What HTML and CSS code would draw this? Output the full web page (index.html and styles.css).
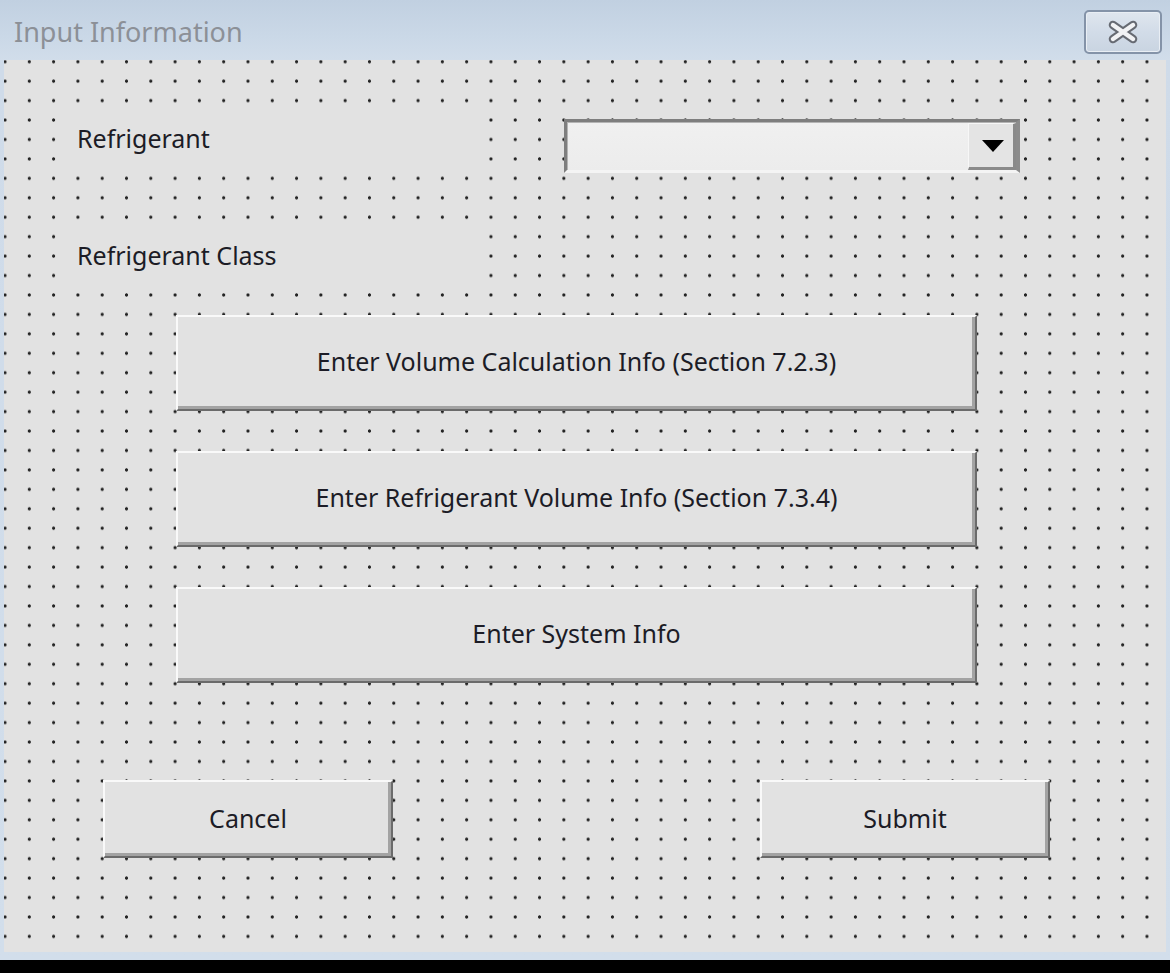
FILE: index.html
```
<!DOCTYPE html>
<html lang="en">
<head>
<meta charset="utf-8">
<title>Input Information</title>
<link rel="stylesheet" href="styles.css">
</head>
<body>
<div class="window">
  <div class="titlebar">
    <span class="title">Input Information</span>
    <div class="close">
      <svg width="32" height="24" viewBox="0 0 32 24">
        <path d="M6 5 L26 19 M26 5 L6 19" stroke="#666a72" stroke-width="8.5" stroke-linecap="round"/>
        <path d="M6 5 L26 19 M26 5 L6 19" stroke="#f1f2f4" stroke-width="4.5" stroke-linecap="round"/>
      </svg>
    </div>
  </div>
  <div class="client">
    <div class="row1">
      <div class="label">Refrigerant</div>
      <div class="combo">
        <div class="combo-field"></div>
        <div class="combo-btn">
          <svg width="22" height="12" viewBox="0 0 22 12"><path d="M0 0 H22 L11 12 Z" fill="#000"/></svg>
        </div>
      </div>
    </div>
    <div class="label label2">Refrigerant Class</div>
    <div class="actions">
      <div class="btn btn-wide">Enter Volume Calculation Info (Section 7.2.3)</div>
      <div class="btn btn-wide">Enter Refrigerant Volume Info (Section 7.3.4)</div>
      <div class="btn btn-wide">Enter System Info</div>
    </div>
    <div class="footer">
      <div class="btn btn-small">Cancel</div>
      <div class="btn btn-small">Submit</div>
    </div>
  </div>
</div>
</body>
</html>
```
FILE: styles.css
```
html, body {
  margin: 0;
  padding: 0;
  background: #000;
}
body {
  font-family: "Noto Sans", "Open Sans", sans-serif;
}
.window {
  width: 1170px;
  height: 960px;
  background: linear-gradient(180deg, #c0cfe0 0%, #cfdbe9 6%, #d2deeb 100%);
  display: flex;
  flex-direction: column;
}
.titlebar {
  height: 60px;
  flex: none;
  display: flex;
  align-items: flex-start;
  justify-content: space-between;
  background: linear-gradient(180deg, #c1d0e1 0%, #cad8e7 60%, #d1ddea 100%);
}
.title {
  margin: 14px 0 0 14px;
  font-size: 27px;
  line-height: 36px;
  color: #8c9097;
}
.close {
  margin: 10px 8px 0 0;
  width: 74px;
  height: 40px;
  border: 2px solid #8493a8;
  border-radius: 5px;
  background: linear-gradient(180deg, #dfe6ee 0%, #d2dce8 50%, #c9d4e1 100%);
  box-shadow: inset 0 0 0 1px #e9eef4;
  display: flex;
  align-items: center;
  justify-content: center;
}
.client {
  flex: 1;
  margin: 0 4px 8px 4px;
  background-color: #e2e2e2;
  background-image: radial-gradient(circle at center, #222 0, #222 1.3px, rgba(34,34,34,0) 1.9px);
  background-size: 24.3px 19.45px;
  background-position: -11.15px -8px;
  display: flex;
  flex-direction: column;
}
.row1 {
  margin-top: 50px;
  height: 63px;
  display: flex;
  align-items: flex-start;
}
.label {
  margin-left: 62px;
  width: 414px;
  height: 58px;
  box-sizing: border-box;
  padding-left: 11px;
  padding-bottom: 3px;
  background: #e2e2e2;
  display: flex;
  align-items: center;
  font-size: 25px;
  color: #1c1c26;
}
.label2 {
  margin-top: 54px;
}
.combo {
  margin-left: 84px;
  margin-top: 9px;
  width: 456px;
  height: 54px;
  box-sizing: border-box;
  border-top: 3px solid #7e7e7e;
  border-left: 3px solid #7e7e7e;
  border-right: 4px solid #8c8c8c;
  border-bottom: 3px solid #f4f4f4;
  box-shadow: inset 1px 1px 0 #b4b4b4;
  background: linear-gradient(180deg, #f0f0f0 0%, #ececec 100%);
  display: flex;
  justify-content: flex-end;
  align-items: stretch;
}
.combo-field {
  flex: 1;
}
.combo-btn {
  width: 48px;
  box-sizing: border-box;
  margin-top: 1px;
  border-top: 1px solid #f7f7f7;
  border-left: 1px solid #f7f7f7;
  border-right: 3px solid #8a8a8a;
  border-bottom: 3px solid #8a8a8a;
  background: #e4e4e4;
  display: flex;
  align-items: center;
  justify-content: center;
  padding-left: 4px;
}
.actions {
  margin-top: 30px;
  margin-left: 172px;
  display: flex;
  flex-direction: column;
  gap: 40px;
}
.btn {
  box-sizing: border-box;
  background: #e2e2e2;
  border-top: 2px solid #f9f9f9;
  border-left: 2px solid #f9f9f9;
  border-right: 2px solid #6b6b6b;
  border-bottom: 2px solid #6b6b6b;
  box-shadow: inset -3px -3px 0 #a3a3a3;
  display: flex;
  align-items: center;
  justify-content: center;
  font-size: 25px;
  color: #1c1c26;
}
.btn-wide {
  width: 801px;
  height: 96px;
  padding-bottom: 4px;
}
.footer {
  margin-top: 97px;
  margin-left: 99px;
  display: flex;
  gap: 367px;
}
.btn-small {
  width: 290px;
  height: 78px;
  padding-bottom: 2px;
}
```
